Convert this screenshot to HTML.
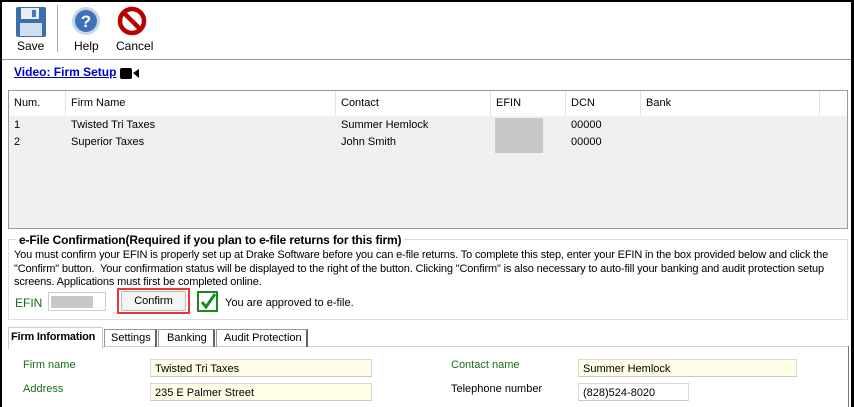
<!DOCTYPE html>
<html><head><style>
body{margin:0;width:854px;height:407px;overflow:hidden;background:#fff;font-family:"Liberation Sans",sans-serif;font-size:11px;color:#000;position:relative}
.a{position:absolute;white-space:nowrap}
.g{color:#1a6e1a}
.inp{position:absolute;background:#fffde6;border:1px solid #d8d8d8;border-bottom-color:#c8c8c8;height:18px;line-height:18px;padding-left:4px;box-sizing:border-box}
</style></head><body>
<div class="a" style="left:0;top:0;width:854px;height:407px;border:2px solid #000;border-right-width:3px;box-sizing:border-box;border-bottom:none"></div>
<svg class="a" style="left:15px;top:6px" width="32" height="32" viewBox="0 0 32 32"><rect x="1" y="1" width="30" height="30" rx="2" fill="#3b6fa8"/><rect x="6" y="2" width="18" height="11" fill="#e8eef6"/><rect x="17" y="4" width="4" height="7" fill="#4a78b0"/><rect x="5" y="17" width="22" height="13" fill="#cfe0f2"/></svg>
<div class="a" style="left:17px;top:39px;font-size:12px">Save</div>
<div class="a" style="left:57px;top:5px;width:1px;height:47px;background:#aaa"></div>
<svg class="a" style="left:71px;top:6px" width="30" height="30" viewBox="0 0 30 30"><circle cx="15" cy="15" r="14" fill="#c8d6ea"/><circle cx="15" cy="15" r="11" fill="#3d72b8"/><text x="15" y="21" text-anchor="middle" font-size="17" font-weight="bold" fill="#fff" font-family="Liberation Sans">?</text></svg>
<div class="a" style="left:74px;top:39px;font-size:12px">Help</div>
<svg class="a" style="left:117px;top:6px" width="30" height="30" viewBox="0 0 30 30"><circle cx="15" cy="15" r="12" fill="none" stroke="#b00" stroke-width="4.5"/><line x1="7" y1="7" x2="23" y2="23" stroke="#b00" stroke-width="4.5"/></svg>
<div class="a" style="left:116px;top:39px;font-size:12px">Cancel</div>
<div class="a" style="left:2px;top:59px;width:849px;height:1px;background:#999"></div>
<div class="a" style="left:14px;top:65px;font-size:12px;font-weight:bold;color:#0000cc;text-decoration:underline">Video: Firm Setup</div>
<svg class="a" style="left:120px;top:68px" width="20" height="11"><rect x="0" y="0" width="12" height="11" rx="2" fill="#000"/><polygon points="13,5 19,1 19,10" fill="#000"/></svg>
<div class="a" style="left:8px;top:90px;width:840px;height:139px;border:1px solid #999;box-sizing:border-box;background:#f0f0f0"></div>
<div class="a" style="left:9px;top:91px;width:838px;height:25px;background:#fff"></div>
<div class="a" style="left:65px;top:91px;width:1px;height:25px;background:#e4e4e4"></div>
<div class="a" style="left:335px;top:91px;width:1px;height:25px;background:#e4e4e4"></div>
<div class="a" style="left:490px;top:91px;width:1px;height:25px;background:#e4e4e4"></div>
<div class="a" style="left:565px;top:91px;width:1px;height:25px;background:#e4e4e4"></div>
<div class="a" style="left:640px;top:91px;width:1px;height:25px;background:#e4e4e4"></div>
<div class="a" style="left:819px;top:91px;width:1px;height:25px;background:#e4e4e4"></div>
<div class="a" style="left:14px;top:97px">Num.</div><div class="a" style="left:71px;top:97px">Firm Name</div><div class="a" style="left:341px;top:97px">Contact</div><div class="a" style="left:496px;top:97px">EFIN</div><div class="a" style="left:571px;top:97px">DCN</div><div class="a" style="left:646px;top:97px">Bank</div>
<div class="a" style="left:495px;top:118px;width:48px;height:35px;background:#c8c8c8"></div>
<div class="a" style="left:14px;top:119px">1</div><div class="a" style="left:71px;top:119px">Twisted Tri Taxes</div><div class="a" style="left:341px;top:119px">Summer Hemlock</div><div class="a" style="left:571px;top:119px">00000</div>
<div class="a" style="left:14px;top:136px">2</div><div class="a" style="left:71px;top:136px">Superior Taxes</div><div class="a" style="left:341px;top:136px">John Smith</div><div class="a" style="left:571px;top:136px">00000</div>
<div class="a" style="left:8px;top:239px;width:840px;height:81px;border:1px solid #ddd;box-sizing:border-box"></div>
<div class="a" style="left:16px;top:233px;background:#fff;padding:0 3px;font-weight:bold;font-size:12px;letter-spacing:-0.15px">e-File Confirmation(Required if you plan to e-file returns for this firm)</div>
<div class="a" style="left:14px;top:249px;line-height:13.5px;font-size:11px;letter-spacing:-0.15px">You must confirm your EFIN is properly set up at Drake Software before you can e-file returns. To complete this step, enter your EFIN in the box provided below and click the<br>"Confirm" button.&nbsp; Your confirmation status will be displayed to the right of the button. Clicking "Confirm" is also necessary to auto-fill your banking and audit protection setup<br>screens. Applications must first be completed online.</div>
<div class="a g" style="left:15px;top:296px;font-size:12px">EFIN</div>
<div class="a" style="left:48px;top:292px;width:58px;height:19px;border:1px solid #ccc;box-sizing:border-box;background:#fff"></div>
<div class="a" style="left:51px;top:296px;width:42px;height:12px;background:#c8c8c8"></div>
<div class="a" style="left:117px;top:288px;width:73px;height:26px;border:2px solid #e53935;box-sizing:border-box"></div>
<div class="a" style="left:121px;top:291px;width:65px;height:20px;border:1px solid #bbb;border-radius:2px;box-sizing:border-box;background:#f4f4f4;text-align:center;line-height:18px">Confirm</div>
<svg class="a" style="left:197px;top:291px" width="22" height="22"><rect x="1" y="1" width="19" height="19" fill="#fff" stroke="#1a8a1a" stroke-width="2"/><path d="M5 11 L9 16 L18 3" fill="none" stroke="#1a8a1a" stroke-width="3"/></svg>
<div class="a" style="left:225px;top:297px;font-size:11px">You are approved to e-file.</div>
<div class="a" style="left:8px;top:346px;width:841px;height:1px;background:#ccc"></div>
<div class="a" style="left:848px;top:346px;width:1px;height:61px;background:#777"></div>
<div class="a" style="left:8px;top:327px;width:95px;height:22px;border:1px solid #ccc;border-bottom:none;background:#fff;box-sizing:border-box;font-weight:bold;padding:3px 0 0 2px;font-size:11px;letter-spacing:-0.2px;overflow:hidden">Firm Information</div>
<div class="a" style="left:104px;top:329px;width:53px;height:18px;border:1px solid #999;border-bottom:none;border-right:2px solid #666;box-sizing:border-box;padding:2px 0 0 6px">Settings</div>
<div class="a" style="left:158px;top:329px;width:57px;height:18px;border:1px solid #999;border-bottom:none;border-right:2px solid #666;box-sizing:border-box;padding:2px 0 0 8px">Banking</div>
<div class="a" style="left:216px;top:329px;width:92px;height:18px;border:1px solid #999;border-bottom:none;border-right:2px solid #666;box-sizing:border-box;padding:2px 0 0 7px">Audit Protection</div>
<div class="a g" style="left:23px;top:359px">Firm name</div>
<div class="inp" style="left:150px;top:359px;width:222px">Twisted Tri Taxes</div>
<div class="a g" style="left:23px;top:383px">Address</div>
<div class="inp" style="left:150px;top:383px;width:222px">235 E Palmer Street</div>
<div class="a g" style="left:451px;top:359px">Contact name</div>
<div class="inp" style="left:578px;top:359px;width:219px">Summer Hemlock</div>
<div class="a" style="left:451px;top:383px">Telephone number</div>
<div class="inp" style="left:578px;top:383px;width:111px;background:#fff">(828)524-8020</div>
</body></html>
